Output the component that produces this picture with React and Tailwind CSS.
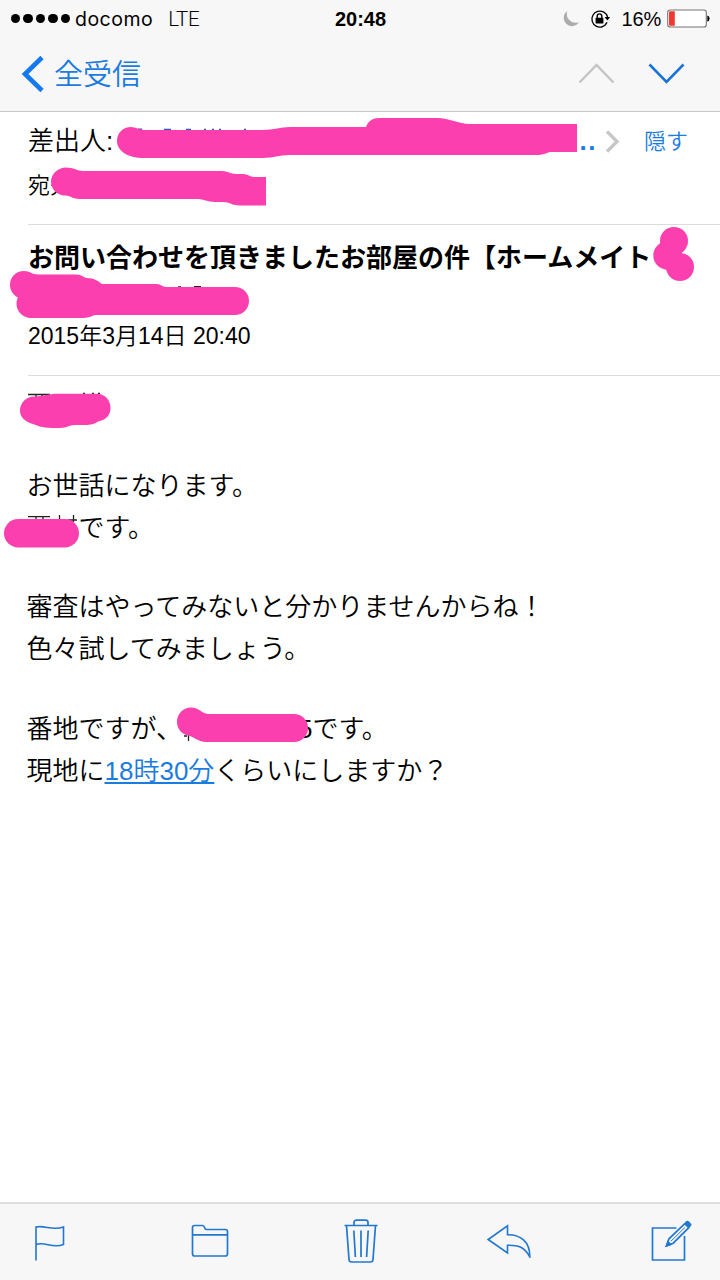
const jp = "font-['Liberation_Sans','Noto_Sans_CJK_JP',sans-serif]";

function StatusBar() {
  return (
    <div className="grid h-9 grid-cols-3 items-center pl-[11px] pr-[10px] text-xl leading-9 text-black">
      <div className="flex items-center">
        <div className="flex gap-[3px]">
          {[1, 2, 3, 4, 5].map((n) => (
            <span key={n} className="h-[9.4px] w-[9.4px] rounded-full bg-black" />
          ))}
        </div>
        <span className="ml-[5px] pt-px font-[Inter] text-[19.5px] tracking-[0.5px]">docomo</span>
        <span className="ml-[15px] pt-px font-[Roboto] text-[20.5px] font-light tracking-[-0.3px]">LTE</span>
      </div>
      <div className="text-center font-bold">20:48</div>
      <div className="flex items-center justify-end">
        <svg width="18" height="18" viewBox="0 0 18 18" className="mr-[10px]">
          <path d="M5.5 1A8.2 8.2 0 1 0 17 12A8.6 8.6 0 0 1 5.5 1Z" fill="#acacac" />
        </svg>
        <svg width="21" height="20" viewBox="0 0 21 20" className="mr-[11px]">
          <path d="M12.2 17.8A8 8 0 1 1 17.6 8" fill="none" stroke="#000" strokeWidth="1.3" />
          <path d="M14.6 8H20.2L17.4 11.6Z" fill="#000" />
          <path d="M17 13.2A8 8 0 0 1 11.6 17.9" fill="none" stroke="#000" strokeWidth="1.3" />
          <rect x="5.6" y="8.8" width="7.8" height="5.8" rx="0.6" fill="#000" />
          <path d="M7.2 9V7.2A2.3 2.3 0 0 1 11.8 7.2V9" fill="none" stroke="#000" strokeWidth="1.4" />
        </svg>
        <span className="pt-px tracking-[-0.2px]">16%</span>
        <svg width="43" height="19" viewBox="0 0 43 19" className="ml-[6px]">
          <rect x="0.7" y="1" width="38.6" height="17" rx="2.6" fill="#fff" stroke="#777" strokeWidth="1.1" />
          <path d="M2 3.4Q2 2.2 3.2 2.2H7.8V16.8H3.2Q2 16.8 2 15.6Z" fill="#ee3a33" />
          <path d="M40.3 6.5Q42.6 7 42.6 9.5Q42.6 12 40.3 12.5Z" fill="#000" />
        </svg>
      </div>
    </div>
  );
}

function NavBar() {
  return (
    <div className="flex h-[75px] items-center justify-between pl-[21px] pr-[35px]">
      <div className="flex items-center text-[#1b7cdf]">
        <svg width="24" height="38" viewBox="0 0 24 38">
          <path d="M21 2.5L4 19L21 35.5" fill="none" stroke="#1479ec" strokeWidth="4.6" />
        </svg>
        <span className="ml-[9px] pt-[3px] text-[29px] font-[350] leading-none">全受信</span>
      </div>
      <div className="flex items-center gap-[33px]">
        <svg width="37" height="22" viewBox="0 0 37 22">
          <path d="M1.5 19.5L18.5 2L35.5 19.5" fill="none" stroke="#c4c4c6" strokeWidth="2.4" />
        </svg>
        <svg width="37" height="22" viewBox="0 0 37 22">
          <path d="M1.5 1.5L18.5 19L35.5 1.5" fill="none" stroke="#1a74d8" strokeWidth="2.6" />
        </svg>
      </div>
    </div>
  );
}

function Toolbar() {
  return (
    <footer className="flex h-[78px] items-center border-t-2 border-[#dedede] bg-[#f7f7f7] pl-[34px]">
      <svg width="31" height="36" viewBox="0 0 31 36" fill="none" stroke="#2277cf" strokeWidth="1.6" className="mt-px">
        <path d="M2 35.5V2C11 0 18 6 29.5 2V19.5C18 24 11 16 2 19.5" />
      </svg>
      <svg width="38" height="34" viewBox="0 0 38 34" fill="none" stroke="#2277cf" strokeWidth="1.7" className="ml-[126px] mt-[-2px]">
        <path d="M1.5 29.5V3.5Q1.5 1.5 3.5 1.5H11.5Q13 1.5 13.5 3.5Q14 5.5 15.5 5.5H34.5Q36.5 5.5 36.5 7.5V29.5Q36.5 32 34.5 32H3.5Q1.5 32 1.5 29.5ZM1.5 10.8H36.5" />
      </svg>
      <svg width="34" height="44" viewBox="0 0 34 44" fill="none" stroke="#2277cf" strokeWidth="1.7" className="ml-[115px] mt-[-2px]">
        <path d="M0.5 6.5H33.5M10 6.5V3.5Q10 1.2 12.5 1.2H21.5Q24 1.2 24 3.5V6.5M2.5 6.5L5 40.5Q5.2 43 7.5 43H26.5Q28.8 43 29 40.5L31.5 6.5M9.8 11.5L11.4 38M17 11.5V38M24.2 11.5L22.6 38" />
      </svg>
      <svg width="44" height="34" viewBox="0 0 44 34" fill="none" stroke="#2277cf" strokeWidth="1.6" className="ml-[109px] mt-[-2px]">
        <path d="M1.2 15.5L20.5 1.8V10.8C34 10.5 43 18 42.8 32.8C37 22.5 30.5 21 20.5 21.3V29Z" />
      </svg>
      <svg width="41" height="42" viewBox="0 0 41 42" fill="none" stroke="#2277cf" strokeWidth="1.7" className="ml-[120px] mt-[-3px]">
        <path d="M25.5 8H1.5V40H33.5V16" />
        <path d="M15.6 25.8L18 18.8L33.8 3.7L37.8 7.7L22.2 23.2Z" />
        <path d="M36.4 3.2L38 4.8" strokeWidth="4.6" strokeLinecap="round" />
        <path d="M19.8 21.3L34 7.4" strokeWidth="1" />
        <path d="M15.6 25.8L17 21.8L19.6 24.4Z" fill="#2277cf" />
      </svg>
    </footer>
  );
}

// Marker strokes that hide the private parts of the mail
function MarkerLayer() {
  return (
    <svg className="pointer-events-none absolute left-0 top-0" width="720" height="1280" viewBox="0 0 720 1280">
      <path d="M138 129.2H142M164 129.5H171M186 129.5H191M204 129.5H206M212 129.5H214M219 129.5H221M244 129.5H246" stroke="#2458c4" strokeWidth="1.4" />
      <path d="M178 287H181M194 286.6H201M28 394.5H50M36 395V399M42 395V399M83 393.4H85M92 393.4H94M98 393.4H100M28 516.7H50M36 517V520M43 517V520M59.5 515V520M73.5 515V522M68 520H77M184 736H187M188.500 735V741" stroke="#222" strokeWidth="1.3" />
      <g fill="#fb3fae">
        <path d="M131 127C136 127 139 130 145 130H262C275 130 280 127 290 127H366C368 121 373 118 379 118H437C450 118 458 124 470 124H577V152H550C545 153 545 155 535 155H290C278 155 275 158 262 158H143C130 158 117 152 117 141C117 133 123 127 131 127Z" />
        <path d="M66 167.5C73 167.5 78 171 83 171H222C228 171 230 174 236 174H243C248 174 250 177 254 177H266V205.5H240C232 205.5 230 202 223 202H215C207 202 204 199 198 199H80C72 199 72 196 65 195.5C57 195.5 51 189 51 181.5C51 174 58 167.5 66 167.5Z" />
        <circle cx="674" cy="241" r="14" />
        <circle cx="667.5" cy="255.5" r="14.2" />
        <circle cx="680" cy="267" r="14" />
        <path d="M24 271C30 271 32 274.5 38 274.5H76C82 274.5 83 277.5 87 278C94 278 98 281 102 284H157C161 284 162 287 166 287H235A14 14 0 0 1 235 315H95C91 316 90 318 80 318H31C23 318 16.5 311.5 16.5 304C16.5 301 17 299 18 297.5C13 295 10 290 10 285C10 277 16 271 24 271Z" />
        <path d="M34 396.5C44 396.5 48 393.8 58 393.8H97C105 394 110.5 400 110.5 408C110.5 416 105 420 98 421.5C93 425 88 425 84 425H75C68 425 68 428 60 428H52C42 428 36 425 33 424C26 422 20 418 20 410.5C20 403 26 396.5 34 396.5Z" />
        <rect x="4" y="519" width="75" height="28.5" rx="14.2" />
        <path d="M191 707.5C199 707.5 202 714 209 714H294A14 14 0 0 1 294 742H206C198 742 193 736 188 735.5C181 734 177 728 177 722C177 714 183 707.5 191 707.5Z" />
      </g>
    </svg>
  );
}

export default function App() {
  return (
    <div className={`relative flex h-[1280px] w-[720px] flex-col overflow-hidden whitespace-nowrap bg-white text-black ${jp}`}>
      <header className="h-28 border-b border-[#c9c9cb] bg-[#f7f7f7]">
        <StatusBar />
        <NavBar />
      </header>

      <main className="flex-1">
        {/* Sender and recipient */}
        <section className="ml-7 h-[113px] border-b border-[#dcdcdc]">
          <div className="flex h-[58px] items-center">
            <span className="pt-px text-[26px] font-[350]">差出人:</span>
            <span className="ml-auto text-[26px] font-bold tracking-[1.5px] text-[#1b7cdf]">...</span>
            <svg width="15" height="23" viewBox="0 0 15 23" className="ml-[8px]">
              <path d="M2 1.5L12 11.5L2 21.5" fill="none" stroke="#c7c7c9" strokeWidth="3.4" />
            </svg>
            <span className="ml-[24px] mr-8 pt-px text-[22px] font-[350] text-[#1b7cdf]">隠す</span>
          </div>
          <div className="h-[30px] pt-px text-[22px] font-[350] leading-[30px]">宛先</div>
        </section>

        {/* Subject and date */}
        <section className="ml-7 h-[151px] border-b border-[#dcdcdc] pt-[12px]">
          <h1 className="h-[83px] text-[26px] font-bold leading-[42px]">
            お問い合わせを頂きましたお部屋の件【ホームメイト
          </h1>
          <p className="text-[23px] font-[350] leading-8">2015年3月14日 20:40</p>
        </section>

        {/* Mail text */}
        <article className="pl-[26.5px] pt-[89px] text-[26px] font-[350] leading-[42px]">
          <p>お世話になります。</p>
          <p className="pl-[52px]">です。</p>
          <p className="mt-[37px]">審査はやってみないと分かりませんからね！</p>
          <p>色々試してみましょう。</p>
          <p className="mt-[38px]">
            番地ですが、<span className="ml-[116px]">5</span>です。
          </p>
          <p>
            現地に
            <a className="text-[#1b7cdf] underline decoration-2 underline-offset-2">18時30分</a>
            くらいにしますか？
          </p>
        </article>
      </main>

      <Toolbar />
      <MarkerLayer />
    </div>
  );
}
